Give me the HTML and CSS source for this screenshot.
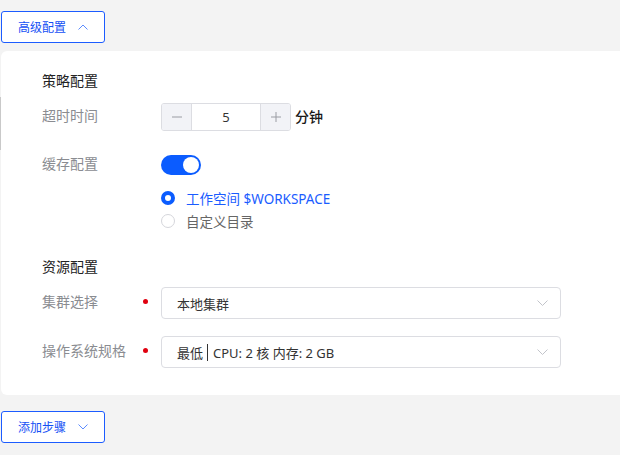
FILE: index.html
```html
<!DOCTYPE html>
<html lang="zh">
<head>
<meta charset="utf-8">
<link rel="stylesheet" href="styles.css">
</head>
<body>
<div class="page">
  <div class="edge-mark"></div>
  <button class="ghost-btn top-btn">高级配置
    <svg class="chev" width="10" height="6" viewBox="0 0 10 6"><path d="M0.5 5.5 L5 1 L9.5 5.5" fill="none" stroke="currentColor" stroke-width="1"/></svg>
  </button>

  <div class="card">
    <div class="section-title">策略配置</div>

    <div class="row row-timeout">
      <div class="label">超时时间</div>
      <div class="control">
        <div class="stepper">
          <span class="step-btn">
            <svg width="10" height="10" viewBox="0 0 10 10"><path d="M0 5 H10" stroke="currentColor" stroke-width="1"/></svg>
          </span>
          <span class="step-value">5</span>
          <span class="step-btn step-plus">
            <svg width="10" height="10" viewBox="0 0 10 10"><path d="M0 5 H10 M5 0 V10" stroke="currentColor" stroke-width="1"/></svg>
          </span>
        </div>
        <span class="unit">分钟</span>
      </div>
    </div>

    <div class="row row-cache">
      <div class="label">缓存配置</div>
      <div class="control">
        <span class="switch"><span class="knob"></span></span>
      </div>
    </div>

    <div class="radios">
      <label class="radio checked"><span class="dot"></span>工作空间 $WORKSPACE</label>
      <label class="radio"><span class="dot"></span>自定义目录</label>
    </div>

    <div class="section-title second">资源配置</div>

    <div class="row row-select">
      <div class="label">集群选择<span class="req"></span></div>
      <div class="select">
        <span class="sel-text">本地集群</span>
        <svg class="sel-chev" width="11" height="6" viewBox="0 0 11 6"><path d="M0.5 0.5 L5.5 5.5 L10.5 0.5" fill="none" stroke="currentColor" stroke-width="1"/></svg>
      </div>
    </div>

    <div class="row row-select second-select">
      <div class="label">操作系统规格<span class="req"></span></div>
      <div class="select">
        <span class="sel-text">最低<span class="bar"></span>CPU: 2 核 内存: 2 GB</span>
        <svg class="sel-chev" width="11" height="6" viewBox="0 0 11 6"><path d="M0.5 0.5 L5.5 5.5 L10.5 0.5" fill="none" stroke="currentColor" stroke-width="1"/></svg>
      </div>
    </div>
  </div>

  <button class="ghost-btn bottom-btn">添加步骤
    <svg class="chev" width="10" height="6" viewBox="0 0 10 6"><path d="M0.5 0.5 L5 5 L9.5 0.5" fill="none" stroke="currentColor" stroke-width="1"/></svg>
  </button>
</div>
</body>
</html>
```

FILE: styles.css
```css
html, body {
  margin: 0;
  padding: 0;
  background: #f3f3f3;
  overflow: hidden;
}
body {
  font-family: "Noto Sans", "Noto Sans CJK SC", sans-serif;
  width: 620px;
  height: 455px;
}
.page {
  position: relative;
  display: flex;
  flex-direction: column;
  align-items: flex-start;
  padding-left: 1px;
}
.edge-mark {
  position: absolute;
  left: 0;
  top: 97px;
  width: 1px;
  height: 53px;
  background: #c9c9c9;
}
.ghost-btn {
  display: flex;
  align-items: center;
  box-sizing: border-box;
  width: 104px;
  height: 32px;
  padding: 0 0 0 16px;
  border: 1px solid #1c5cff;
  border-radius: 3px;
  background: #fff;
  color: #1450f5;
  font-family: "Noto Sans CJK SC", sans-serif;
  font-size: 12px;
  line-height: 1;
  cursor: pointer;
}
.ghost-btn .chev {
  margin-left: 12px;
  color: #5c8cff;
}
.top-btn { margin-top: 11px; }
.bottom-btn { margin-top: 16px; }

.card {
  margin-top: 8px;
  box-sizing: border-box;
  width: 640px;
  height: 344px;
  background: #fff;
  border-radius: 6px 0 0 6px;
  padding: 21px 0 0 41px;
  display: flex;
  flex-direction: column;
}
.section-title {
  font-family: "Noto Sans CJK SC", sans-serif;
  font-size: 14px;
  line-height: 16px;
  height: 16px;
  padding-bottom: 4px;
  color: #222;
}
.section-title.second { margin-top: 27px; }

.row {
  display: flex;
  align-items: center;
}
.label {
  position: relative;
  width: 119px;
  flex: none;
  font-family: "Noto Sans CJK SC", sans-serif;
  font-size: 14px;
  line-height: 16px;
  padding-bottom: 4px;
  color: #8a8c91;
}
.req {
  position: absolute;
  left: 101px;
  top: 6px;
  width: 5px;
  height: 5px;
  border-radius: 50%;
  background: #e0000f;
}
.control {
  display: flex;
  align-items: center;
}
.row-timeout { margin-top: 11px; height: 28px; }
.stepper {
  display: flex;
  box-sizing: border-box;
  width: 130px;
  height: 28px;
  border: 1px solid #dcdde2;
  border-radius: 3px;
  overflow: hidden;
}
.step-btn {
  display: flex;
  align-items: center;
  justify-content: center;
  width: 29px;
  background: #f2f3f7;
  color: #9a9ca3;
  border-right: 1px solid #dcdde2;
}
.step-btn.step-plus {
  border-right: none;
  border-left: 1px solid #dcdde2;
}
.step-value {
  flex: 1;
  display: flex;
  align-items: center;
  justify-content: center;
  font-size: 13px;
  color: #333;
}
.unit {
  margin-left: 4px;
  margin-bottom: 2px;
  font-family: "Noto Sans CJK SC", sans-serif;
  font-size: 14px;
  font-weight: 500;
  color: #1a1a1a;
}
.row-cache { margin-top: 24px; height: 20px; }
.switch {
  position: relative;
  display: block;
  width: 40px;
  height: 20px;
  border-radius: 10px;
  background: #0b5cff;
}
.knob {
  position: absolute;
  right: 2px;
  top: 2px;
  width: 16px;
  height: 16px;
  border-radius: 50%;
  background: #fff;
}
.radios {
  display: flex;
  flex-direction: column;
  gap: 3px;
  margin-top: 13px;
  padding-left: 119px;
}
.radio {
  display: flex;
  align-items: center;
  height: 20px;
  font-size: 13.5px;
  color: #666;
}
.radio .dot {
  box-sizing: border-box;
  width: 14px;
  height: 14px;
  margin-right: 11px;
  border-radius: 50%;
  border: 1px solid #d5d6db;
  background: #fff;
}
.radio.checked { color: #1a5cff; }
.radio.checked .dot {
  border: 4px solid #0b5cff;
}
.row-select { margin-top: 9px; }
.second-select { margin-top: 17px; }
.select {
  display: flex;
  align-items: center;
  justify-content: space-between;
  box-sizing: border-box;
  width: 400px;
  height: 32px;
  padding: 0 12px 0 15px;
  border: 1px solid #dcdde2;
  border-radius: 4px;
}
.sel-text {
  display: flex;
  align-items: center;
  font-size: 13px;
  color: #333;
}
.bar {
  display: inline-block;
  width: 1px;
  height: 17px;
  margin: 0 5px 0 4px;
  background: #333;
}
.sel-chev { color: #c2c4ca; }
```
